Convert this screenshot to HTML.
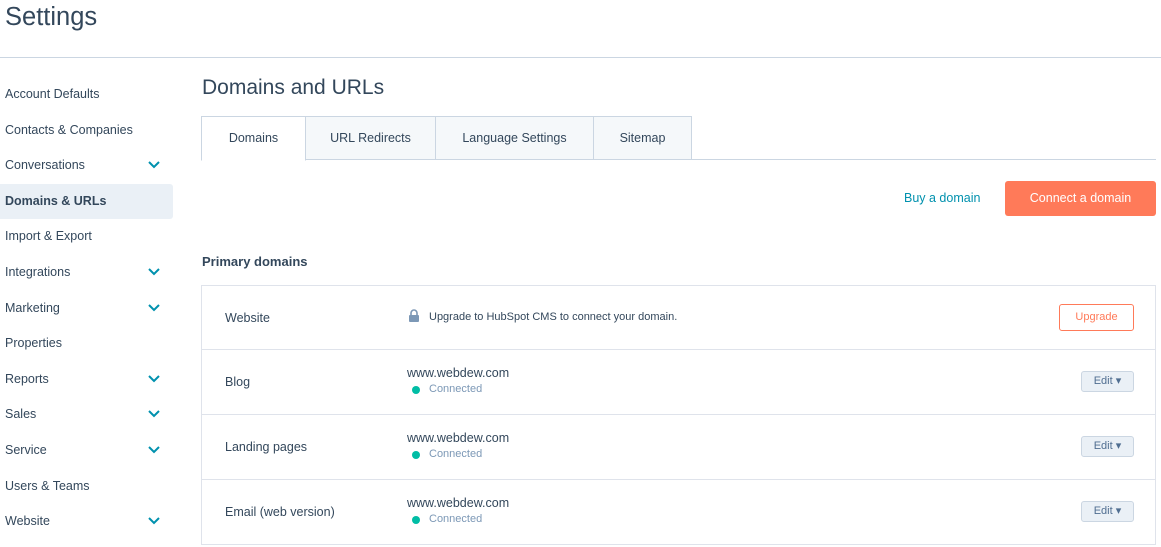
<!DOCTYPE html>
<html><head><meta charset="utf-8"><style>
*{margin:0;padding:0;box-sizing:border-box}
body{width:1161px;height:547px;overflow:hidden;background:#fff;font-family:"Liberation Sans",sans-serif;color:#33475b;position:relative}
.a{position:absolute}
.h1{left:5px;top:3px;font-size:25.5px;font-weight:300;color:#33475b}
.hr{left:0;top:57px;width:1161px;height:1px;background:#cbd6e2}
.nav{left:0;top:77px;width:173px}
.nav div{height:35.6px;line-height:35.6px;padding-left:5px;font-size:12.5px;position:relative;color:#33475b}
.nav div.act{background:#eaf0f6;font-weight:bold;border-radius:0 3px 3px 0}
.nav svg{position:absolute;left:148px;top:13px}
.tabs{left:201px;top:116px;height:44px;width:955px;border-bottom:1px solid #cbd6e2}
.tab{position:absolute;top:0;height:44px;border:1px solid #cbd6e2;background:#f5f8fa;font-size:12.5px;text-align:center;line-height:42px}
.row{position:absolute;left:201px;width:955px;height:65px;border:1px solid #dfe3eb;border-top:none}
.lbl{position:absolute;left:23px;top:0;line-height:64px;font-size:12.5px}
.dom{position:absolute;left:205px;top:16px;font-size:12.5px}
.con{position:absolute;left:227px;top:33px;font-size:11px;color:#7c98b6}
.con:before{content:"";position:absolute;left:-17px;top:3px;width:8px;height:8px;border-radius:50%;background:#00bda5}
.edit{position:absolute;left:879px;top:21px;width:53px;height:21px;background:#eaf0f6;border:1px solid #cbd6e2;border-radius:3px;font-size:11px;text-align:center;line-height:19px;color:#506e91}
</style></head><body>
<div class="a h1">Settings</div>
<div class="a hr"></div>
<div class="a nav">
<div>Account Defaults</div>
<div>Contacts &amp; Companies</div>
<div>Conversations<svg width="12" height="8"><path d="M1 1l5 5 5-5" stroke="#0091ae" stroke-width="2" fill="none"/></svg></div>
<div class="act">Domains &amp; URLs</div>
<div>Import &amp; Export</div>
<div>Integrations<svg width="12" height="8"><path d="M1 1l5 5 5-5" stroke="#0091ae" stroke-width="2" fill="none"/></svg></div>
<div>Marketing<svg width="12" height="8"><path d="M1 1l5 5 5-5" stroke="#0091ae" stroke-width="2" fill="none"/></svg></div>
<div>Properties</div>
<div>Reports<svg width="12" height="8"><path d="M1 1l5 5 5-5" stroke="#0091ae" stroke-width="2" fill="none"/></svg></div>
<div>Sales<svg width="12" height="8"><path d="M1 1l5 5 5-5" stroke="#0091ae" stroke-width="2" fill="none"/></svg></div>
<div>Service<svg width="12" height="8"><path d="M1 1l5 5 5-5" stroke="#0091ae" stroke-width="2" fill="none"/></svg></div>
<div>Users &amp; Teams</div>
<div>Website<svg width="12" height="8"><path d="M1 1l5 5 5-5" stroke="#0091ae" stroke-width="2" fill="none"/></svg></div>
</div>
<div class="a" style="left:202px;top:76px;font-size:21px;font-weight:300">Domains and URLs</div>
<div class="a tabs">
<div class="tab" style="left:0;width:105px;background:#fff;border-bottom-color:#fff;height:45px">Domains</div>
<div class="tab" style="left:104px;width:131px">URL Redirects</div>
<div class="tab" style="left:234px;width:159px">Language Settings</div>
<div class="tab" style="left:392px;width:99px">Sitemap</div>
</div>
<div class="a" style="left:904px;top:191px;font-size:12.5px;color:#0091ae">Buy a domain</div>
<div class="a" style="left:1005px;top:181px;width:151px;height:35px;background:#ff7a59;border-radius:3px;color:#fff;font-size:12.5px;text-align:center;line-height:35px">Connect a domain</div>
<div class="a" style="left:202px;top:254px;font-size:13px;font-weight:bold">Primary domains</div>
<div class="row" style="top:285px;border-top:1px solid #dfe3eb"><div class="lbl">Website</div>
<svg class="a" style="left:206px;top:23px" width="12" height="13"><path d="M3 6V4a3 3 0 0 1 6 0v2" stroke="#7c98b6" stroke-width="1.6" fill="none"/><rect x="1" y="6" width="10" height="7" rx="1" fill="#7c98b6"/></svg>
<div class="a" style="left:227px;top:25px;font-size:11px">Upgrade to HubSpot CMS to connect your domain.</div>
<div class="a" style="left:857px;top:18px;width:75px;height:27px;border:1px solid #ff7a59;border-radius:3px;color:#ff7a59;font-size:11px;text-align:center;line-height:25px">Upgrade</div></div>
<div class="row" style="top:350px"><div class="lbl">Blog</div><div class="dom">www.webdew.com</div><div class="con">Connected</div><div class="edit">Edit ▾</div></div>
<div class="row" style="top:415px"><div class="lbl">Landing pages</div><div class="dom">www.webdew.com</div><div class="con">Connected</div><div class="edit">Edit ▾</div></div>
<div class="row" style="top:480px"><div class="lbl">Email (web version)</div><div class="dom">www.webdew.com</div><div class="con">Connected</div><div class="edit">Edit ▾</div></div>
</body></html>
